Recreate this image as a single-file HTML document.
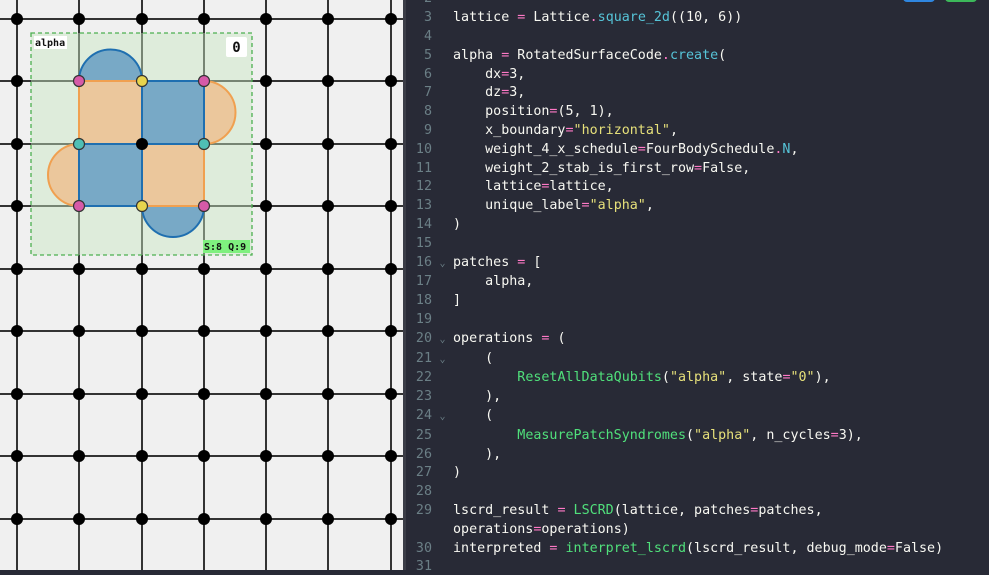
<!DOCTYPE html>
<html><head><style>
html,body{margin:0;padding:0;width:989px;height:570px;overflow:hidden;background:#282a36}
#left{position:absolute;left:0;top:0;width:403px;height:570px;background:#f0f0f0}
#div{position:absolute;left:403px;top:0;width:3px;height:570px;background:#3a3c46}
#code{position:absolute;left:406px;top:0;width:583px;height:570px;background:#282a36;overflow:hidden}
pre{position:absolute;left:0;top:-9.6px;margin:0;font-family:"DejaVu Sans Mono","Liberation Mono",monospace;font-size:13.35px;line-height:18.8px;color:#f8f8f2}
.n{display:inline-block;width:26px;text-align:right;color:#6b7f86}
.f{display:inline-block;width:21px;color:#6b7f86;font-size:10px;text-align:center}
.o{color:#ff79c6}.m{color:#56c4d8}.s{color:#e6e07a}.g{color:#50e07b}
</style></head><body>
<div id="left">
<svg width="403" height="570" xmlns="http://www.w3.org/2000/svg">
<g stroke="#333" stroke-width="2">
<line x1="17" y1="0" x2="17" y2="570"/><line x1="79" y1="0" x2="79" y2="570"/><line x1="142" y1="0" x2="142" y2="570"/><line x1="204" y1="0" x2="204" y2="570"/><line x1="266" y1="0" x2="266" y2="570"/><line x1="328" y1="0" x2="328" y2="570"/><line x1="391" y1="0" x2="391" y2="570"/>
<line x1="0" y1="19" x2="403" y2="19"/><line x1="0" y1="81" x2="403" y2="81"/><line x1="0" y1="144" x2="403" y2="144"/><line x1="0" y1="206" x2="403" y2="206"/><line x1="0" y1="269" x2="403" y2="269"/><line x1="0" y1="331" x2="403" y2="331"/><line x1="0" y1="394" x2="403" y2="394"/><line x1="0" y1="456" x2="403" y2="456"/><line x1="0" y1="519" x2="403" y2="519"/>
</g>
<rect x="31" y="33" width="221" height="222" fill="#c8e6c0" fill-opacity="0.45" stroke="#4caf50" stroke-width="1.3" stroke-dasharray="4,3"/>
<g stroke-width="2">
<path d="M79,81 A31.5,31.5 0 0 1 142,81 Z" fill="#78a9c6" stroke="#1f6fb0"/>
<path d="M142,206 A31,31 0 0 0 204,206 Z" fill="#78a9c6" stroke="#1f6fb0"/>
<path d="M204,81 A31.5,31.5 0 0 1 204,144 Z" fill="#ebc79c" stroke="#f0a050"/>
<path d="M79,144 A31,31 0 0 0 79,206 Z" fill="#ebc79c" stroke="#f0a050"/>
<rect x="79" y="81" width="63" height="63" fill="#ebc79c" stroke="#f0a050"/>
<rect x="142" y="144" width="62" height="62" fill="#ebc79c" stroke="#f0a050"/>
<rect x="142" y="81" width="62" height="63" fill="#78a9c6" stroke="#1f6fb0"/>
<rect x="79" y="144" width="63" height="62" fill="#78a9c6" stroke="#1f6fb0"/>
</g>
<g fill="#000">
<circle cx="17" cy="19" r="6"/><circle cx="79" cy="19" r="6"/><circle cx="142" cy="19" r="6"/><circle cx="204" cy="19" r="6"/><circle cx="266" cy="19" r="6"/><circle cx="328" cy="19" r="6"/><circle cx="391" cy="19" r="6"/>
<circle cx="17" cy="81" r="6"/><circle cx="266" cy="81" r="6"/><circle cx="328" cy="81" r="6"/><circle cx="391" cy="81" r="6"/>
<circle cx="17" cy="144" r="6"/><circle cx="142" cy="144" r="6"/><circle cx="266" cy="144" r="6"/><circle cx="328" cy="144" r="6"/><circle cx="391" cy="144" r="6"/>
<circle cx="17" cy="206" r="6"/><circle cx="266" cy="206" r="6"/><circle cx="328" cy="206" r="6"/><circle cx="391" cy="206" r="6"/>
<circle cx="17" cy="269" r="6"/><circle cx="79" cy="269" r="6"/><circle cx="142" cy="269" r="6"/><circle cx="204" cy="269" r="6"/><circle cx="266" cy="269" r="6"/><circle cx="328" cy="269" r="6"/><circle cx="391" cy="269" r="6"/>
<circle cx="17" cy="331" r="6"/><circle cx="79" cy="331" r="6"/><circle cx="142" cy="331" r="6"/><circle cx="204" cy="331" r="6"/><circle cx="266" cy="331" r="6"/><circle cx="328" cy="331" r="6"/><circle cx="391" cy="331" r="6"/>
<circle cx="17" cy="394" r="6"/><circle cx="79" cy="394" r="6"/><circle cx="142" cy="394" r="6"/><circle cx="204" cy="394" r="6"/><circle cx="266" cy="394" r="6"/><circle cx="328" cy="394" r="6"/><circle cx="391" cy="394" r="6"/>
<circle cx="17" cy="456" r="6"/><circle cx="79" cy="456" r="6"/><circle cx="142" cy="456" r="6"/><circle cx="204" cy="456" r="6"/><circle cx="266" cy="456" r="6"/><circle cx="328" cy="456" r="6"/><circle cx="391" cy="456" r="6"/>
<circle cx="17" cy="519" r="6"/><circle cx="79" cy="519" r="6"/><circle cx="142" cy="519" r="6"/><circle cx="204" cy="519" r="6"/><circle cx="266" cy="519" r="6"/><circle cx="328" cy="519" r="6"/><circle cx="391" cy="519" r="6"/>
</g>
<g stroke="#333" stroke-width="1.2">
<circle cx="79" cy="81" r="5.5" fill="#d65aa8"/><circle cx="204" cy="81" r="5.5" fill="#d65aa8"/><circle cx="79" cy="206" r="5.5" fill="#d65aa8"/><circle cx="204" cy="206" r="5.5" fill="#d65aa8"/>
<circle cx="142" cy="81" r="5.5" fill="#e8d44d"/><circle cx="142" cy="206" r="5.5" fill="#e8d44d"/>
<circle cx="79" cy="144" r="5.5" fill="#4fbfb5"/><circle cx="204" cy="144" r="5.5" fill="#4fbfb5"/>
</g>
<rect x="34" y="36" width="33" height="13" fill="#fff"/>
<text x="35" y="46" font-family="DejaVu Sans Mono,monospace" font-size="10" font-weight="bold" fill="#111">alpha</text>
<rect x="226" y="37" width="21" height="20" fill="#fff" rx="2"/>
<text x="236.5" y="52" text-anchor="middle" font-family="DejaVu Sans Mono,monospace" font-size="14" font-weight="bold" fill="#111">0</text>
<rect x="203" y="240" width="47" height="13" fill="#7ff07f"/>
<text x="204" y="250" font-family="DejaVu Sans Mono,monospace" font-size="10" font-weight="bold" fill="#111">S:8 Q:9</text>
</svg>
</div>
<div id="div"></div>
<div id="code">
<div style="position:absolute;left:497px;top:-6px;width:32px;height:8px;border-radius:4px;background:#2f86e0"></div>
<div style="position:absolute;left:539px;top:-6px;width:32px;height:8px;border-radius:4px;background:#3cb85a"></div>
<pre><span class="n">2</span><span class="f"></span>
<span class="n">3</span><span class="f"></span>lattice <span class="o">=</span> Lattice<span class="o">.</span><span class="m">square_2d</span>((10, 6))
<span class="n">4</span><span class="f"></span>
<span class="n">5</span><span class="f"></span>alpha <span class="o">=</span> RotatedSurfaceCode<span class="o">.</span><span class="m">create</span>(
<span class="n">6</span><span class="f"></span>    dx<span class="o">=</span>3,
<span class="n">7</span><span class="f"></span>    dz<span class="o">=</span>3,
<span class="n">8</span><span class="f"></span>    position<span class="o">=</span>(5, 1),
<span class="n">9</span><span class="f"></span>    x_boundary<span class="o">=</span><span class="s">"horizontal"</span>,
<span class="n">10</span><span class="f"></span>    weight_4_x_schedule<span class="o">=</span>FourBodySchedule<span class="o">.</span><span class="m">N</span>,
<span class="n">11</span><span class="f"></span>    weight_2_stab_is_first_row<span class="o">=</span>False,
<span class="n">12</span><span class="f"></span>    lattice<span class="o">=</span>lattice,
<span class="n">13</span><span class="f"></span>    unique_label<span class="o">=</span><span class="s">"alpha"</span>,
<span class="n">14</span><span class="f"></span>)
<span class="n">15</span><span class="f"></span>
<span class="n">16</span><span class="f">⌄</span>patches <span class="o">=</span> [
<span class="n">17</span><span class="f"></span>    alpha,
<span class="n">18</span><span class="f"></span>]
<span class="n">19</span><span class="f"></span>
<span class="n">20</span><span class="f">⌄</span>operations <span class="o">=</span> (
<span class="n">21</span><span class="f">⌄</span>    (
<span class="n">22</span><span class="f"></span>        <span class="g">ResetAllDataQubits</span>(<span class="s">"alpha"</span>, state<span class="o">=</span><span class="s">"0"</span>),
<span class="n">23</span><span class="f"></span>    ),
<span class="n">24</span><span class="f">⌄</span>    (
<span class="n">25</span><span class="f"></span>        <span class="g">MeasurePatchSyndromes</span>(<span class="s">"alpha"</span>, n_cycles<span class="o">=</span>3),
<span class="n">26</span><span class="f"></span>    ),
<span class="n">27</span><span class="f"></span>)
<span class="n">28</span><span class="f"></span>
<span class="n">29</span><span class="f"></span>lscrd_result <span class="o">=</span> <span class="g">LSCRD</span>(lattice, patches<span class="o">=</span>patches,
<span class="n"></span><span class="f"></span>operations<span class="o">=</span>operations)
<span class="n">30</span><span class="f"></span>interpreted <span class="o">=</span> <span class="g">interpret_lscrd</span>(lscrd_result, debug_mode<span class="o">=</span>False)
<span class="n">31</span><span class="f"></span>
</pre>
</div>
</body></html>
